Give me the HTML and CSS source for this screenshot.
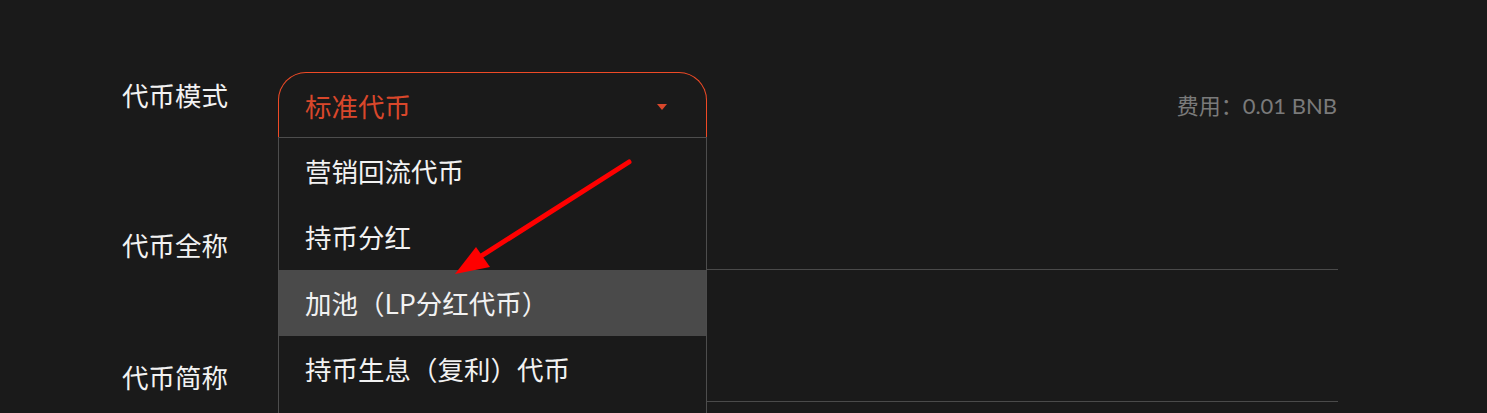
FILE: index.html
```html
<!DOCTYPE html>
<html lang="zh-CN">
<head>
<meta charset="utf-8">
<title>代币模式</title>
<link rel="stylesheet" href="styles.css">
</head>
<body>
<div class="form">
  <div class="row">
    <div class="label label-top">代币模式</div>
    <div class="field field-split">
      <div class="select">
        <div class="select-value">
          <span>标准代币</span>
          <span class="caret"></span>
        </div>
        <ul class="menu">
          <li class="menu-item">营销回流代币</li>
          <li class="menu-item">持币分红</li>
          <li class="menu-item is-active">加池（LP分红代币）</li>
          <li class="menu-item">持币生息（复利）代币</li>
        </ul>
      </div>
      <div class="fee">费用：0.01 BNB</div>
    </div>
  </div>
  <div class="row">
    <div class="label">代币全称</div>
    <div class="field"><div class="input"></div></div>
  </div>
  <div class="row">
    <div class="label">代币简称</div>
    <div class="field"><div class="input"></div></div>
  </div>
</div>
<svg class="pointer" width="1487" height="413" viewBox="0 0 1487 413" xmlns="http://www.w3.org/2000/svg">
  <line x1="629" y1="162" x2="478" y2="258" stroke="#ff0000" stroke-width="5" stroke-linecap="round"/>
  <polygon points="455,274 476,247 490,267" fill="#ff0000"/>
</svg>
</body>
</html>
```
FILE: styles.css
```css
* { box-sizing: border-box; }
html, body {
  margin: 0;
  padding: 0;
  background: #1a1a1a;
  overflow: hidden;
}
body {
  width: 1487px;
  height: 413px;
  font-family: "Noto Sans CJK SC", "Noto Sans", sans-serif;
  color: #f2f2f2;
}
.form {
  padding: 72px 0 0 122px;
  display: flex;
  flex-direction: column;
  gap: 66px;
}
.row {
  display: flex;
  align-items: flex-start;
  height: 66px;
}
.label {
  width: 156px;
  flex: none;
  font-size: 26.5px;
  line-height: 36px;
  padding-top: 23px;
  color: #f2f2f2;
}
.label-top { padding-top: 5px; }
.field {
  width: 1060px;
  height: 66px;
  position: relative;
}
.field-split {
  display: flex;
  justify-content: space-between;
  align-items: center;
}
.select {
  width: 429px;
  height: 66px;
  position: relative;
  z-index: 2;
}
.select-value {
  height: 66px;
  border: 1px solid #ee4a26;
  border-bottom: none;
  border-radius: 28px 28px 0 0;
  display: flex;
  align-items: center;
  justify-content: space-between;
  padding: 0 39px 0 26px;
  color: #d9472b;
  font-size: 26.5px;
  line-height: 36px;
}
.caret {
  width: 0;
  height: 0;
  border-left: 5px solid transparent;
  border-right: 5px solid transparent;
  border-top: 6px solid #d9472b;
  margin-top: 2px;
}
.menu {
  list-style: none;
  margin: 0;
  padding: 0 0 40px;
  position: absolute;
  left: 0;
  top: 65px;
  width: 429px;
  background: #1a1a1a;
  border: 1px solid #4d4d4d;
  border-bottom: none;
}
.menu-item {
  height: 66px;
  display: flex;
  align-items: center;
  padding-left: 26px;
  font-size: 26.5px;
  line-height: 36px;
  color: #f2f2f2;
}
.menu-item.is-active { background: #4a4a4a; }
.fee {
  font-family: "Lato", "Noto Sans CJK SC", sans-serif;
  font-size: 22px;
  color: #7a7a7a;
  margin-right: 1px;
  margin-top: -2px;
}
.input {
  height: 66px;
  border-bottom: 1px solid #4a4a4a;
}
.pointer {
  position: absolute;
  left: 0;
  top: 0;
  z-index: 5;
  pointer-events: none;
}
```
